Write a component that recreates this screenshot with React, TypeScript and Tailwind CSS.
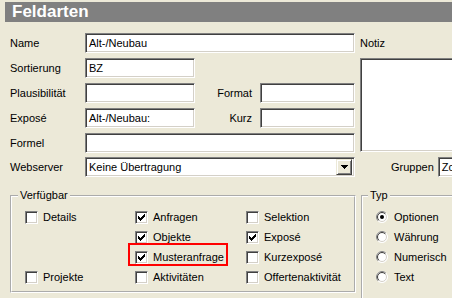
import React from 'react';

const sunken =
  'border border-t-[#808080] border-l-[#808080] border-b-white border-r-white shadow-[inset_1px_1px_0_#404040,inset_-1px_-1px_0_#d4d0c8] bg-white';

function Field({ value = '', className = '' }: { value?: string; className?: string }) {
  return (
    <div className={`${sunken} h-[20px] flex items-center pl-[3px] overflow-hidden whitespace-nowrap ${className}`}>
      {value}
    </div>
  );
}

function Row({ label, children, className = '' }: { label: string; children: React.ReactNode; className?: string }) {
  return (
    <div className={`flex items-center h-[20px] ${className}`}>
      <span className="w-[75px] shrink-0">{label}</span>
      {children}
    </div>
  );
}

function Check({ label, checked = false }: { label: string; checked?: boolean }) {
  return (
    <div className="flex items-center gap-[5px] h-[20px] whitespace-nowrap">
      <span className={`${sunken} w-[13px] h-[13px] shrink-0 flex items-center justify-center`}>
        {checked && (
          <svg width="7" height="7" viewBox="0 0 7 7" shapeRendering="crispEdges">
            <path
              fill="#000"
              d="M6 0h1v1h-1z M5 1h2v1h-2z M0 2h1v1h-1z M4 2h3v1h-3z M0 3h2v1h-2z M3 3h3v1h-3z M0 4h5v1h-5z M1 5h3v1h-3z M2 6h1v1h-1z"
            />
          </svg>
        )}
      </span>
      {label}
    </div>
  );
}

function Radio({ label, checked = false }: { label: string; checked?: boolean }) {
  return (
    <div className="flex items-center gap-[6px] h-[20px] whitespace-nowrap">
      <svg width="12" height="12" viewBox="0 0 12 12" className="shrink-0">
        <circle cx="6" cy="6" r="5.5" fill="#fff" stroke="#fff" />
        <path d="M2.1 9.9 A5.5 5.5 0 0 1 9.9 2.1" fill="none" stroke="#808080" />
        <circle cx="6" cy="6" r="4.5" fill="#fff" stroke="#d4d0c8" />
        <path d="M2.8 9.2 A4.5 4.5 0 0 1 9.2 2.8" fill="none" stroke="#404040" />
        {checked && <circle cx="6" cy="6" r="2" fill="#000" />}
      </svg>
      {label}
    </div>
  );
}

export default function App() {
  return (
    <div className="w-[452px] h-[298px] overflow-hidden bg-[#ECE9D8] text-[11px] leading-[13px] text-black font-['Liberation_Sans',Arial,sans-serif] pt-[2px]">
      <div className="ml-[5px] h-[20px] bg-[#808080] text-white text-[17px] font-bold leading-[19px] pl-[7px]">
        Feldarten
      </div>

      <div className="flex w-[600px] mt-[11px] pl-[10px]">
        <div className="w-[345px] shrink-0 flex flex-col">
          <Row label="Name">
            <Field className="w-[270px]" value="Alt-/Neubau" />
          </Row>
          <Row label="Sortierung" className="mt-[5px]">
            <Field className="w-[110px]" value="BZ" />
          </Row>
          <Row label="Plausibilität" className="mt-[5px]">
            <Field className="w-[110px]" />
            <span className="w-[65px] text-right pr-[8px]">Format</span>
            <Field className="w-[95px]" />
          </Row>
          <Row label="Exposé" className="mt-[5px]">
            <Field className="w-[110px]" value="Alt-/Neubau:" />
            <span className="w-[65px] text-right pr-[8px]">Kurz</span>
            <Field className="w-[95px]" />
          </Row>
          <Row label="Formel" className="mt-[5px]">
            <Field className="w-[270px]" />
          </Row>
          <Row label="Webserver" className="mt-[4px]">
            <div className={`${sunken} w-[270px] h-[20px] flex items-center pl-[3px] pr-[2px]`}>
              <span>Keine Übertragung</span>
              <div className="ml-auto w-[16px] h-[16px] bg-[#ECE9D8] border border-t-[#ECE9D8] border-l-[#ECE9D8] border-b-[#404040] border-r-[#404040] shadow-[inset_1px_1px_0_#fff,inset_-1px_-1px_0_#808080] flex items-center justify-center">
                <svg width="7" height="4" viewBox="0 0 7 4" shapeRendering="crispEdges">
                  <path d="M0 0h7v1h-7z M1 1h5v1h-5z M2 2h3v1h-3z M3 3h1v1h-1z" fill="#000" />
                </svg>
              </div>
            </div>
          </Row>
        </div>

        <div className="ml-[5px] w-[200px] shrink-0 flex flex-col">
          <div className="h-[20px] flex items-center">Notiz</div>
          <div className={`${sunken} mt-[5px] h-[94px] w-[160px] shrink-0`} />
          <div className="mt-[5px] h-[20px] flex items-center pl-[31px]">
            <span>Gruppen</span>
            <Field className="ml-[4px] w-[80px] shrink-0" value="Zc" />
          </div>
        </div>
      </div>

      <div className="flex w-[600px] pl-[10px] mt-[12px]">
        <fieldset className="w-[346px] h-[104px] shrink-0 border-2 border-white [border-style:groove] m-0 p-0">
          <legend className="ml-[6px] px-[2px] leading-[13px]">Verfügbar</legend>
          <div className="grid grid-cols-[110px_111px_1fr] pl-[13px] pt-[5px]">
            <Check label="Details" />
            <Check label="Anfragen" checked />
            <Check label="Selektion" />
            <div />
            <Check label="Objekte" checked />
            <Check label="Exposé" checked />
            <div />
            <div className="relative w-fit">
              <Check label="Musteranfrage" checked />
              <div className="absolute -left-[7px] -right-[4px] -top-[4px] bottom-[1px] border-2 border-[#ff0000]" />
            </div>
            <Check label="Kurzexposé" />
            <Check label="Projekte" />
            <Check label="Aktivitäten" />
            <Check label="Offertenaktivität" />
          </div>
        </fieldset>

        <fieldset className="ml-[5px] w-[160px] h-[130px] shrink-0 border-2 border-white [border-style:groove] m-0 p-0">
          <legend className="ml-[5px] px-[2px] leading-[13px]">Typ</legend>
          <div className="flex flex-col pl-[13px] pt-[5px]">
            <Radio label="Optionen" checked />
            <Radio label="Währung" />
            <Radio label="Numerisch" />
            <Radio label="Text" />
          </div>
        </fieldset>
      </div>
    </div>
  );
}
